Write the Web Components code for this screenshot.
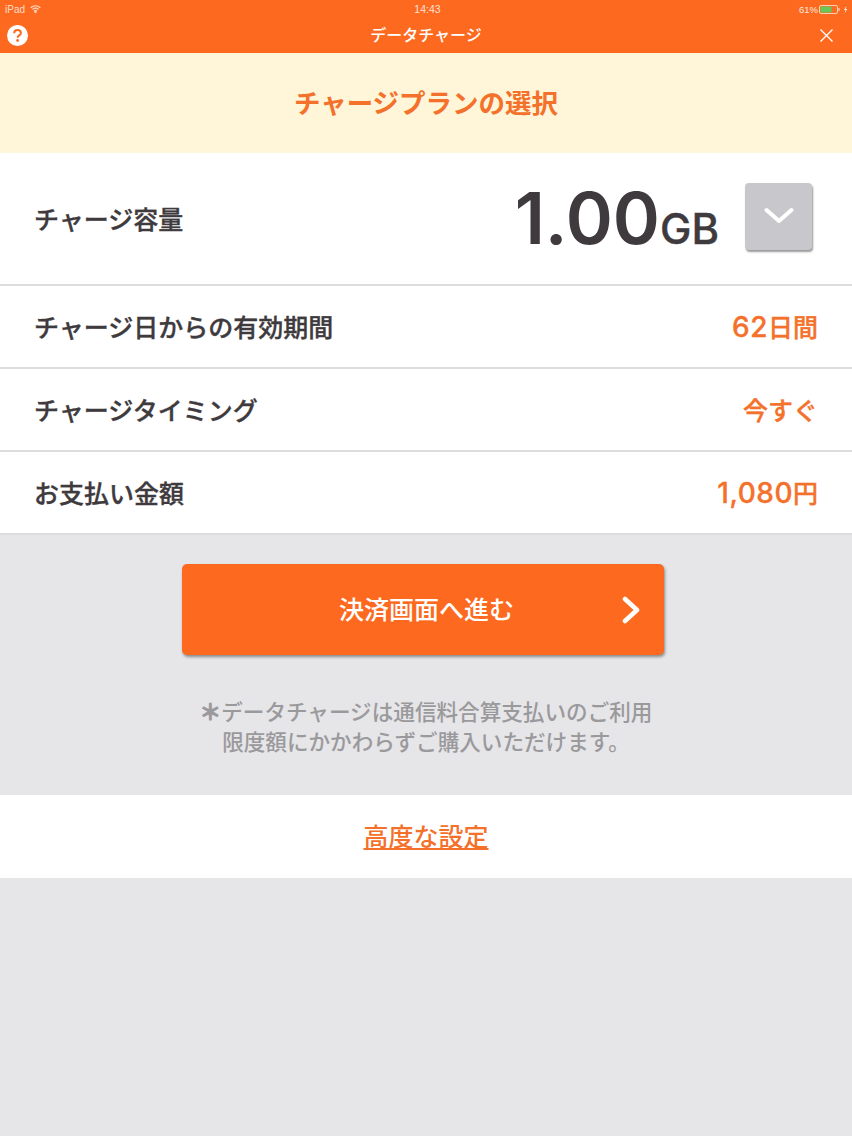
<!DOCTYPE html>
<html lang="ja">
<head>
<meta charset="utf-8">
<title>データチャージ</title>
<style>
  html, body { margin: 0; padding: 0; }
  body {
    background: #e6e5e8;
    font-family: "Noto Sans CJK JP", "Noto Sans", sans-serif;
    color: #3e3a3d;
    min-height: 1136px;
  }
  action-area b { -webkit-text-stroke: 1px #9a999c; }
</style>
</head>
<body>
<app-header title-text="データチャージ"></app-header>
<plan-banner>チャージプランの選択</plan-banner>
<capacity-row label="チャージ容量" amount="1.00" unit="GB"></capacity-row>
<info-row label="チャージ日からの有効期間" value="62日間"></info-row>
<info-row label="チャージタイミング" value="今すぐ"></info-row>
<info-row label="お支払い金額" value="1,080円"></info-row>
<action-area>
  <span><b>＊</b>データチャージは通信料合算支払いのご利用</span>
  <span>限度額にかかわらずご購入いただけます。</span>
</action-area>
<link-bar>高度な設定</link-bar>

<script>
// ヘッダー(ステータスバー+タイトル)
class AppHeader extends HTMLElement {
  connectedCallback() {
    this.attachShadow({ mode: "open" });
    this.shadowRoot.innerHTML = `
      <style>
        :host { display: block; height: 53px; background: #fd6a1f; color: #fff; }
        .status {
          height: 18px; display: grid; grid-template-columns: 1fr auto 1fr;
          align-items: center; padding: 0 4px 0 5px;
          font: 10px "Liberation Sans", sans-serif;
        }
        .left { display: flex; align-items: center; gap: 5px; opacity: .75; }
        .clock { font-size: 10.5px; opacity: .8; margin-left: 2px; }
        .right { display: flex; align-items: center; justify-content: flex-end; gap: 1px; opacity: .85; }
        .pct { font-size: 9.5px; }
        .bar {
          height: 35px; display: grid; grid-template-columns: 1fr auto 1fr;
          align-items: center; padding: 0 19px 0 7px;
        }
        .title { font-size: 16px; font-weight: 500; line-height: 24px; margin: -3px 0 0 12px; }
        .help { width: 21px; height: 21px; display: block; }
        .close { justify-self: end; width: 13px; height: 13px; display: block; }
      </style>
      <div class="status">
        <div class="left">
          <span>iPad</span>
          <svg width="11" height="8" viewBox="0 0 11 8" fill="none" stroke="#fff" stroke-width="1.2">
            <path d="M.7 2.7C3.5.2 7.5.2 10.3 2.7"/>
            <path d="M2.4 4.4c1.8-1.5 4.4-1.5 6.2 0"/>
            <path d="M4 6c.9-.7 2.1-.7 3 0"/>
            <circle cx="5.5" cy="7.2" r=".5" fill="#fff"/>
          </svg>
        </div>
        <span class="clock">14:43</span>
        <div class="right">
          <span class="pct">61%</span>
          <svg width="29" height="9" viewBox="0 0 29 9">
            <rect x=".5" y=".5" width="18" height="8" rx="1.5" fill="none" stroke="#fff" stroke-opacity=".8"/>
            <rect x="1.5" y="1.5" width="11" height="6" fill="#4cd964"/>
            <rect x="19.5" y="3" width="1" height="3" fill="#fff"/>
            <path d="M27.5 .5 25 5h1.500L25.800 8.500 28.300 4h-1.500z" fill="#fff"/>
          </svg>
        </div>
      </div>
      <div class="bar">
        <svg class="help" viewBox="0 0 21 21">
          <circle cx="10.5" cy="10.5" r="10.5" fill="#fff"/>
          <path d="M7.2 8.2c0-2 1.5-3.2 3.4-3.2s3.3 1.1 3.3 2.9c0 2.500-3.300 2.500-3.300 4.800" fill="none" stroke="#fd6a1f" stroke-width="2"/>
          <circle cx="10.6" cy="15.500" r="1.400" fill="#fd6a1f"/>
        </svg>
        <span class="title">${this.getAttribute("title-text")}</span>
        <svg class="close" viewBox="0 0 13 13" fill="none" stroke="#fff" stroke-width="1.300">
          <path d="M.5.5l12 12M12.500.5l-12 12"/>
        </svg>
      </div>
    `;
  }
}

class PlanBanner extends HTMLElement {
  connectedCallback() {
    this.attachShadow({ mode: "open" });
    this.shadowRoot.innerHTML = `
      <style>
        :host {
          display: flex; height: 100px; box-sizing: border-box; padding-bottom: 4px;
          align-items: center; justify-content: center;
          background: #fff5d8; color: #f4712b;
          font-size: 26.5px; font-weight: 700;
        }
      </style>
      <slot></slot>
    `;
  }
}

class CapacityRow extends HTMLElement {
  connectedCallback() {
    this.attachShadow({ mode: "open" });
    this.shadowRoot.innerHTML = `
      <style>
        :host {
          display: flex; height: 133px; box-sizing: border-box; align-items: center;
          justify-content: space-between; padding: 0 40px 0 34px;
          background: #fff; border-bottom: 2px solid #dcdbde;
        }
        .label { font-size: 25px; font-weight: 500; -webkit-text-stroke: .35px #3e3a3d; color: #3e3a3d; margin-top: -1px; }
        .right { display: flex; align-items: center; gap: 26px; }
        .num {
          font-family: "Inter", "Liberation Sans", sans-serif; font-weight: 600; color: #3e3a3d;
          font-size: 71.5px; line-height: 1; display: flex; align-items: baseline;
        }
        .unit { font-size: 42px; font-weight: 500; -webkit-text-stroke: .4px #3e3a3d; }
        .drop {
          width: 67px; height: 67px; margin-top: -5px; border-radius: 4px; background: #c8c7cb;
          box-shadow: 1px 2px 2px rgba(0,0,0,.4); display: flex; align-items: center; justify-content: center;
        }
      </style>
      <span class="label">${this.getAttribute("label")}</span>
      <div class="right">
        <div class="num">${this.getAttribute("amount")}<span class="unit">${this.getAttribute("unit")}</span></div>
        <div class="drop">
          <svg width="30" height="18" viewBox="0 0 30 18" fill="none" stroke="#fff" stroke-width="4" stroke-linecap="round" stroke-linejoin="round">
            <path d="M2.500 3 15 14 27.500 3"/>
          </svg>
        </div>
      </div>
    `;
  }
}

class InfoRow extends HTMLElement {
  connectedCallback() {
    this.attachShadow({ mode: "open" });
    // 数字だけ大きめに表示する
    const value = this.getAttribute("value").replace(/[\d,]+/, m => `<span class="digits">${m}</span>`);
    this.shadowRoot.innerHTML = `
      <style>
        :host {
          display: flex; height: 83px; box-sizing: border-box; align-items: center;
          justify-content: space-between; padding: 0 34px 2px;
          background: #fff; border-bottom: 2px solid #dcdbde;
          font-size: 25px; font-weight: 500;
        }
        .label { color: #3e3a3d; -webkit-text-stroke: .35px #3e3a3d; }
        .value { color: #f4712b; -webkit-text-stroke: .35px #f4712b; }
        .digits { font-family: "Inter", sans-serif; font-size: 28px; font-weight: 500; letter-spacing: .5px; }
      </style>
      <span class="label">${this.getAttribute("label")}</span>
      <span class="value">${value}</span>
    `;
  }
}

class ActionArea extends HTMLElement {
  connectedCallback() {
    this.attachShadow({ mode: "open" });
    this.shadowRoot.innerHTML = `
      <style>
        :host {
          display: flex; flex-direction: column; align-items: center;
          height: 260px; box-sizing: border-box; padding-top: 29px;
        }
        .btn {
          width: 482px; height: 91px; box-sizing: border-box; border-radius: 5px; margin-right: 6px;
          background: #fd6a1f; color: #fff; box-shadow: 1px 2px 3px rgba(0,0,0,.4);
          display: flex; align-items: center; padding: 0 24px 0 157px; justify-content: space-between;
          font-size: 25px; font-weight: 500;
        }
        .btn span { margin-top: -4px; }
        .note {
          margin-top: 41px; display: flex; flex-direction: column; align-items: center;
          color: #9a999c; font-size: 21.6px; font-weight: 500; line-height: 30px;
        }
        ::slotted(span) { display: block; }
      </style>
      <div class="btn">
        <span>決済画面へ進む</span>
        <svg width="18" height="28" viewBox="0 0 18 28" fill="none" stroke="#fff" stroke-width="4.500" stroke-linecap="round" stroke-linejoin="round">
          <path d="M3 3 15 14 3 25"/>
        </svg>
      </div>
      <div class="note"><slot></slot></div>
    `;
  }
}

class LinkBar extends HTMLElement {
  connectedCallback() {
    this.attachShadow({ mode: "open" });
    this.shadowRoot.innerHTML = `
      <style>
        :host {
          display: flex; height: 83px; box-sizing: border-box; padding-bottom: 4px;
          align-items: center; justify-content: center;
          background: #fff; color: #f4712b; font-size: 25px; font-weight: 500;
          text-decoration: underline;
        }
      </style>
      <slot></slot>
    `;
  }
}

customElements.define("app-header", AppHeader);
customElements.define("plan-banner", PlanBanner);
customElements.define("capacity-row", CapacityRow);
customElements.define("info-row", InfoRow);
customElements.define("action-area", ActionArea);
customElements.define("link-bar", LinkBar);
</script>
</body>
</html>
